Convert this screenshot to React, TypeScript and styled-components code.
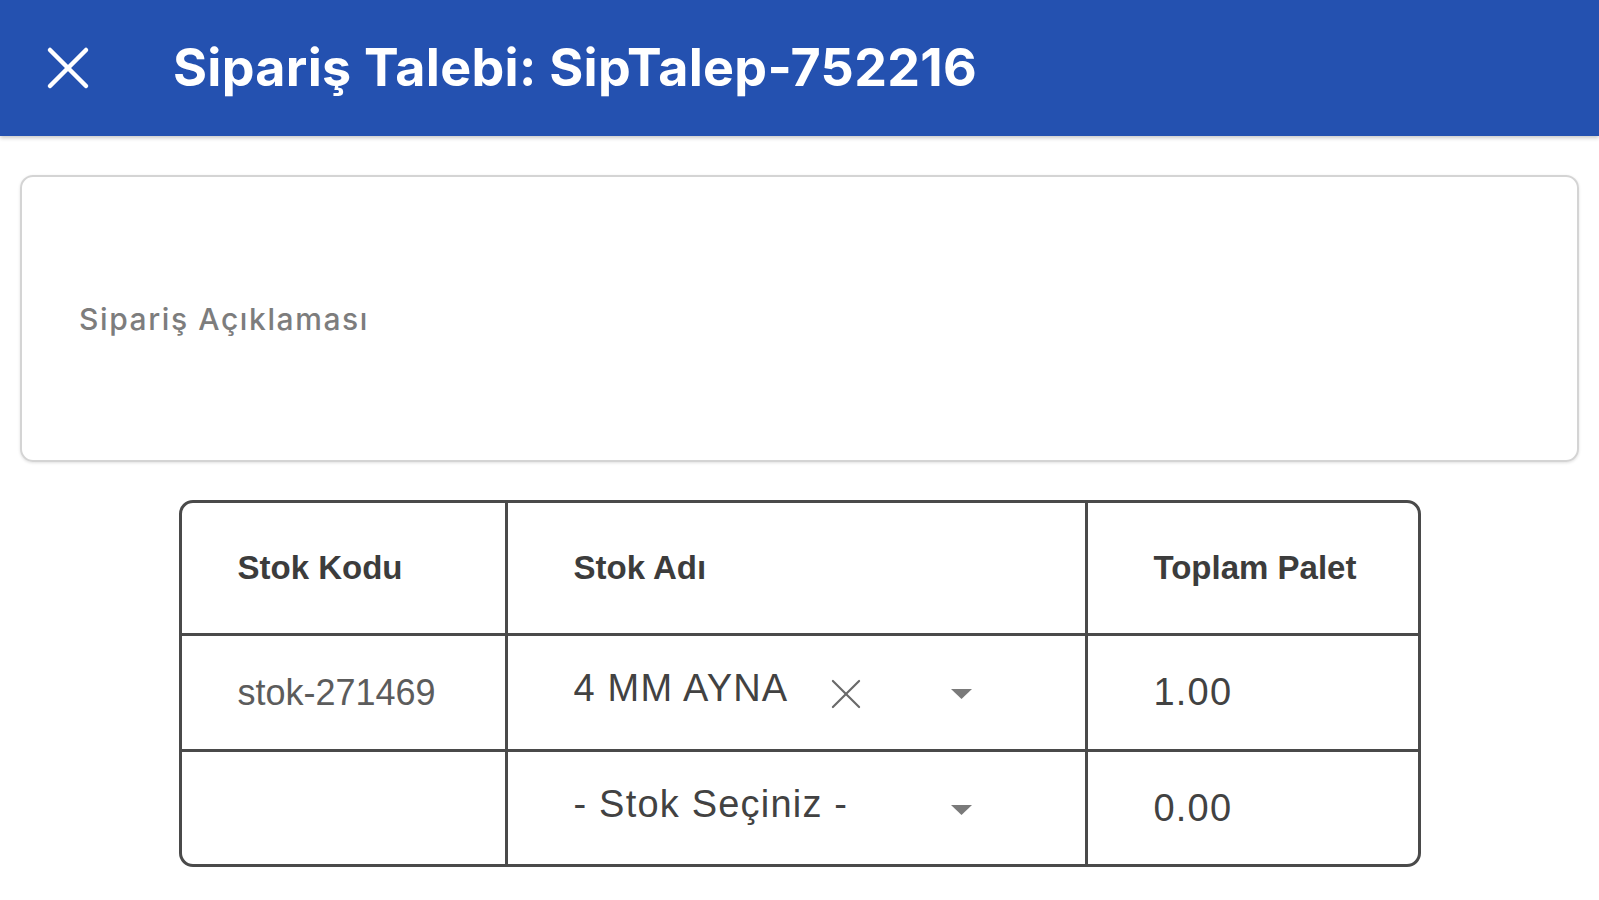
import React from "react"
import styled, {createGlobalStyle} from "styled-components"

const GlobalStyle = createGlobalStyle`
  html, body {
    margin: 0;
    padding: 0;
    background: #ffffff;
  }
  * {
    box-sizing: border-box;
  }
`

const Page = styled.div`
  width: 1599px;
  min-height: 900px;
  background: #ffffff;
`

const Header = styled.header`
  height: 136px;
  background-color: #2451b0;
  display: flex;
  align-items: center;
  padding-left: 46px;
  box-shadow: 0 2px 4px rgba(0, 0, 0, 0.22);
`

const CloseButton = styled.button`
  width: 44px;
  height: 44px;
  padding: 0;
  border: none;
  background: none;
  display: flex;
  align-items: center;
  justify-content: center;
  cursor: pointer;
`

const Title = styled.h1`
  margin: 0 0 0 83px;
  color: #ffffff;
  font-family: Inter, "Open Sans", sans-serif;
  font-weight: 700;
  font-size: 52px;
  letter-spacing: 0.3px;
  line-height: 1;
`

const Content = styled.main`
  padding: 39px 20px 0 20px;
  display: flex;
  flex-direction: column;
  align-items: center;
  gap: 38px;
`

const NoteBox = styled.div`
  width: 100%;
  height: 287px;
  border: 2px solid #d4d4d4;
  border-radius: 13px;
  box-shadow: 0 1px 3px rgba(0, 0, 0, 0.12);
  display: flex;
  align-items: center;
  padding-left: 57px;
`

const NoteLabel = styled.span`
  font-family: Inter, "Noto Sans", sans-serif;
  font-size: 30px;
  font-weight: 500;
  letter-spacing: 1.6px;
  color: #7d7d7d;
`

const Table = styled.div`
  width: 1242px;
  border: 3px solid #4a4a4a;
  border-radius: 14px;
  overflow: hidden;
  display: grid;
  grid-template-columns: 326px 580px 1fr;
  grid-auto-rows: auto;
  font-family: "Liberation Sans", Arial, sans-serif;
`

const Cell = styled.div<{$height: number; $pad: number; $last?: boolean; $bottom?: boolean}>`
  height: ${p => p.$height}px;
  padding-left: ${p => p.$pad}px;
  display: flex;
  align-items: center;
  border-right: ${p => (p.$last ? "none" : "3px solid #4a4a4a")};
  border-bottom: ${p => (p.$bottom ? "none" : "3px solid #4a4a4a")};
`

const HeadText = styled.span`
  font-size: 33px;
  font-weight: 700;
  color: #3c3c3c;
`

const CodeText = styled.span`
  font-size: 36px;
  color: #5c5c5c;
`

const ValueText = styled.span`
  font-size: 38px;
  letter-spacing: 1.2px;
  color: #424242;
`

const SelectBox = styled.div`
  width: 398px;
  display: flex;
  align-items: center;
`

const SelectValue = styled.div`
  flex: 1;
  display: flex;
  align-items: center;
  margin-top: -8px;
`

const ClearIcon = styled.span`
  margin-left: 42px;
  margin-top: 10px;
  display: flex;
`

const Caret = styled.span`
  display: flex;
  margin-top: 4px;
`

type Row = {code: string; name: string; palet: string; selected: boolean}

const rows: Row[] = [
  {code: "stok-271469", name: "4 MM AYNA", palet: "1.00", selected: true},
  {code: "", name: "- Stok Seçiniz -", palet: "0.00", selected: false}
]

function XIcon(props: {size: number; color: string; stroke: number}) {
  return (
    <svg width={props.size} height={props.size} viewBox="0 0 44 44">
      <line x1="4" y1="4" x2="40" y2="40" stroke={props.color} strokeWidth={props.stroke} strokeLinecap="round" />
      <line x1="40" y1="4" x2="4" y2="40" stroke={props.color} strokeWidth={props.stroke} strokeLinecap="round" />
    </svg>
  )
}

function CaretIcon() {
  return (
    <svg width="21" height="11" viewBox="0 0 21 11">
      <polygon points="0,0 21,0 10.5,10" fill="#7a7a7a" />
    </svg>
  )
}

function App() {
  return (
    <Page>
      <GlobalStyle />
      <Header>
        <CloseButton>
          <XIcon size={44} color="#ffffff" stroke={4.5} />
        </CloseButton>
        <Title>Sipariş Talebi: SipTalep-752216</Title>
      </Header>
      <Content>
        <NoteBox>
          <NoteLabel>Sipariş Açıklaması</NoteLabel>
        </NoteBox>
        <Table>
          <Cell $height={133} $pad={56}><HeadText>Stok Kodu</HeadText></Cell>
          <Cell $height={133} $pad={66}><HeadText>Stok Adı</HeadText></Cell>
          <Cell $height={133} $pad={66} $last><HeadText>Toplam Palet</HeadText></Cell>
          {rows.map((row, i) => {
            const isLast = i === rows.length - 1
            const h = isLast ? 112 : 116
            return (
              <React.Fragment key={i}>
                <Cell $height={h} $pad={56} $bottom={isLast}>
                  <CodeText>{row.code}</CodeText>
                </Cell>
                <Cell $height={h} $pad={66} $bottom={isLast}>
                  <SelectBox>
                    <SelectValue>
                      <ValueText>{row.name}</ValueText>
                      {row.selected && (
                        <ClearIcon>
                          <XIcon size={32} color="#6a6a6a" stroke={3} />
                        </ClearIcon>
                      )}
                    </SelectValue>
                    <Caret><CaretIcon /></Caret>
                  </SelectBox>
                </Cell>
                <Cell $height={h} $pad={66} $last $bottom={isLast}>
                  <ValueText>{row.palet}</ValueText>
                </Cell>
              </React.Fragment>
            )
          })}
        </Table>
      </Content>
    </Page>
  )
}

export default App
